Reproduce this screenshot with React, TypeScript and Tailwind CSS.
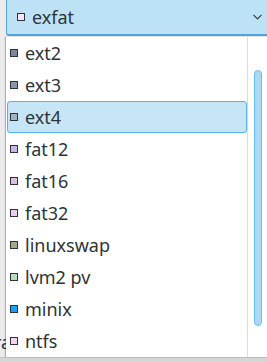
import React from "react";

type Fs = { name: string; color: string };

const items: Fs[] = [
  { name: "ext2", color: "#7d8696" },
  { name: "ext3", color: "#8a96a9" },
  { name: "ext4", color: "#a3b1c4" },
  { name: "fat12", color: "#c8b4ea" },
  { name: "fat16", color: "#d6c0e2" },
  { name: "fat32", color: "#e9cdf0" },
  { name: "linuxswap", color: "#a6a68a" },
  { name: "lvm2 pv", color: "#b6dcbc" },
  { name: "minix", color: "#1aa0f0" },
  { name: "ntfs", color: "#f4d4f4" },
];

function Swatch({ color }: { color: string }) {
  return (
    <span
      className="inline-block w-[8px] h-[8px] border border-[#2e3436] shrink-0"
      style={{ backgroundColor: color }}
    />
  );
}

export default function App() {
  return (
    <div
      className="relative w-[267px] h-[362px] overflow-hidden bg-[#ececec] text-[#2e3436] flex flex-col"
      style={{ fontFamily: '"Noto Sans", "Open Sans", sans-serif' }}
    >
      {/* combo button */}
      <div className="ml-[6px] h-[36px] flex items-center bg-[#bde2f5] border-l border-b-2 border-[#4ea6da] rounded-bl-[3px] pl-[10px] pr-[5px]">
        <Swatch color="#fde0fb" />
        <span className="ml-[7px] text-[18px] leading-none">exfat</span>
        <svg className="ml-auto" width="9" height="6" viewBox="0 0 9 6">
          <path d="M0.5 0.8 L4.5 4.8 L8.5 0.8" fill="none" stroke="#3a3f44" strokeWidth="1.2" />
        </svg>
      </div>

      {/* window content hidden behind the popup */}
      <div className="mt-[297px] text-[18px] leading-none -ml-[6px]">ra</div>
      <div className="mt-auto h-[5px] bg-[#d6d6d6] border-t border-[#c4c4c4]" />

      {/* dropdown popup */}
      <div className="absolute left-[6px] top-[37px] w-[261px] h-[320px] bg-white shadow-[-1px_0_1px_rgba(0,0,0,0.25)] flex">
        <div className="w-[241px] flex flex-col">
          {items.map((it) => (
            <div
              key={it.name}
              className={`h-[32px] flex items-center ml-[1px] ${
                it.name === "ext4"
                  ? "bg-[#c6e6f8] border border-[#55b2ea] rounded-[3px] pl-[2px]"
                  : "pl-[3px]"
              }`}
            >
              <Swatch color={it.color} />
              <span className="ml-[7px] text-[18px] leading-none">{it.name}</span>
            </div>
          ))}
        </div>
        <div className="w-px bg-[#dcdcdc]" />
        <div className="flex-1 pt-[33px] pl-[6px]">
          <div className="w-[8px] h-[256px] rounded-full bg-[#acd8f3] border border-[#6abdee]" />
        </div>
      </div>
    </div>
  );
}
